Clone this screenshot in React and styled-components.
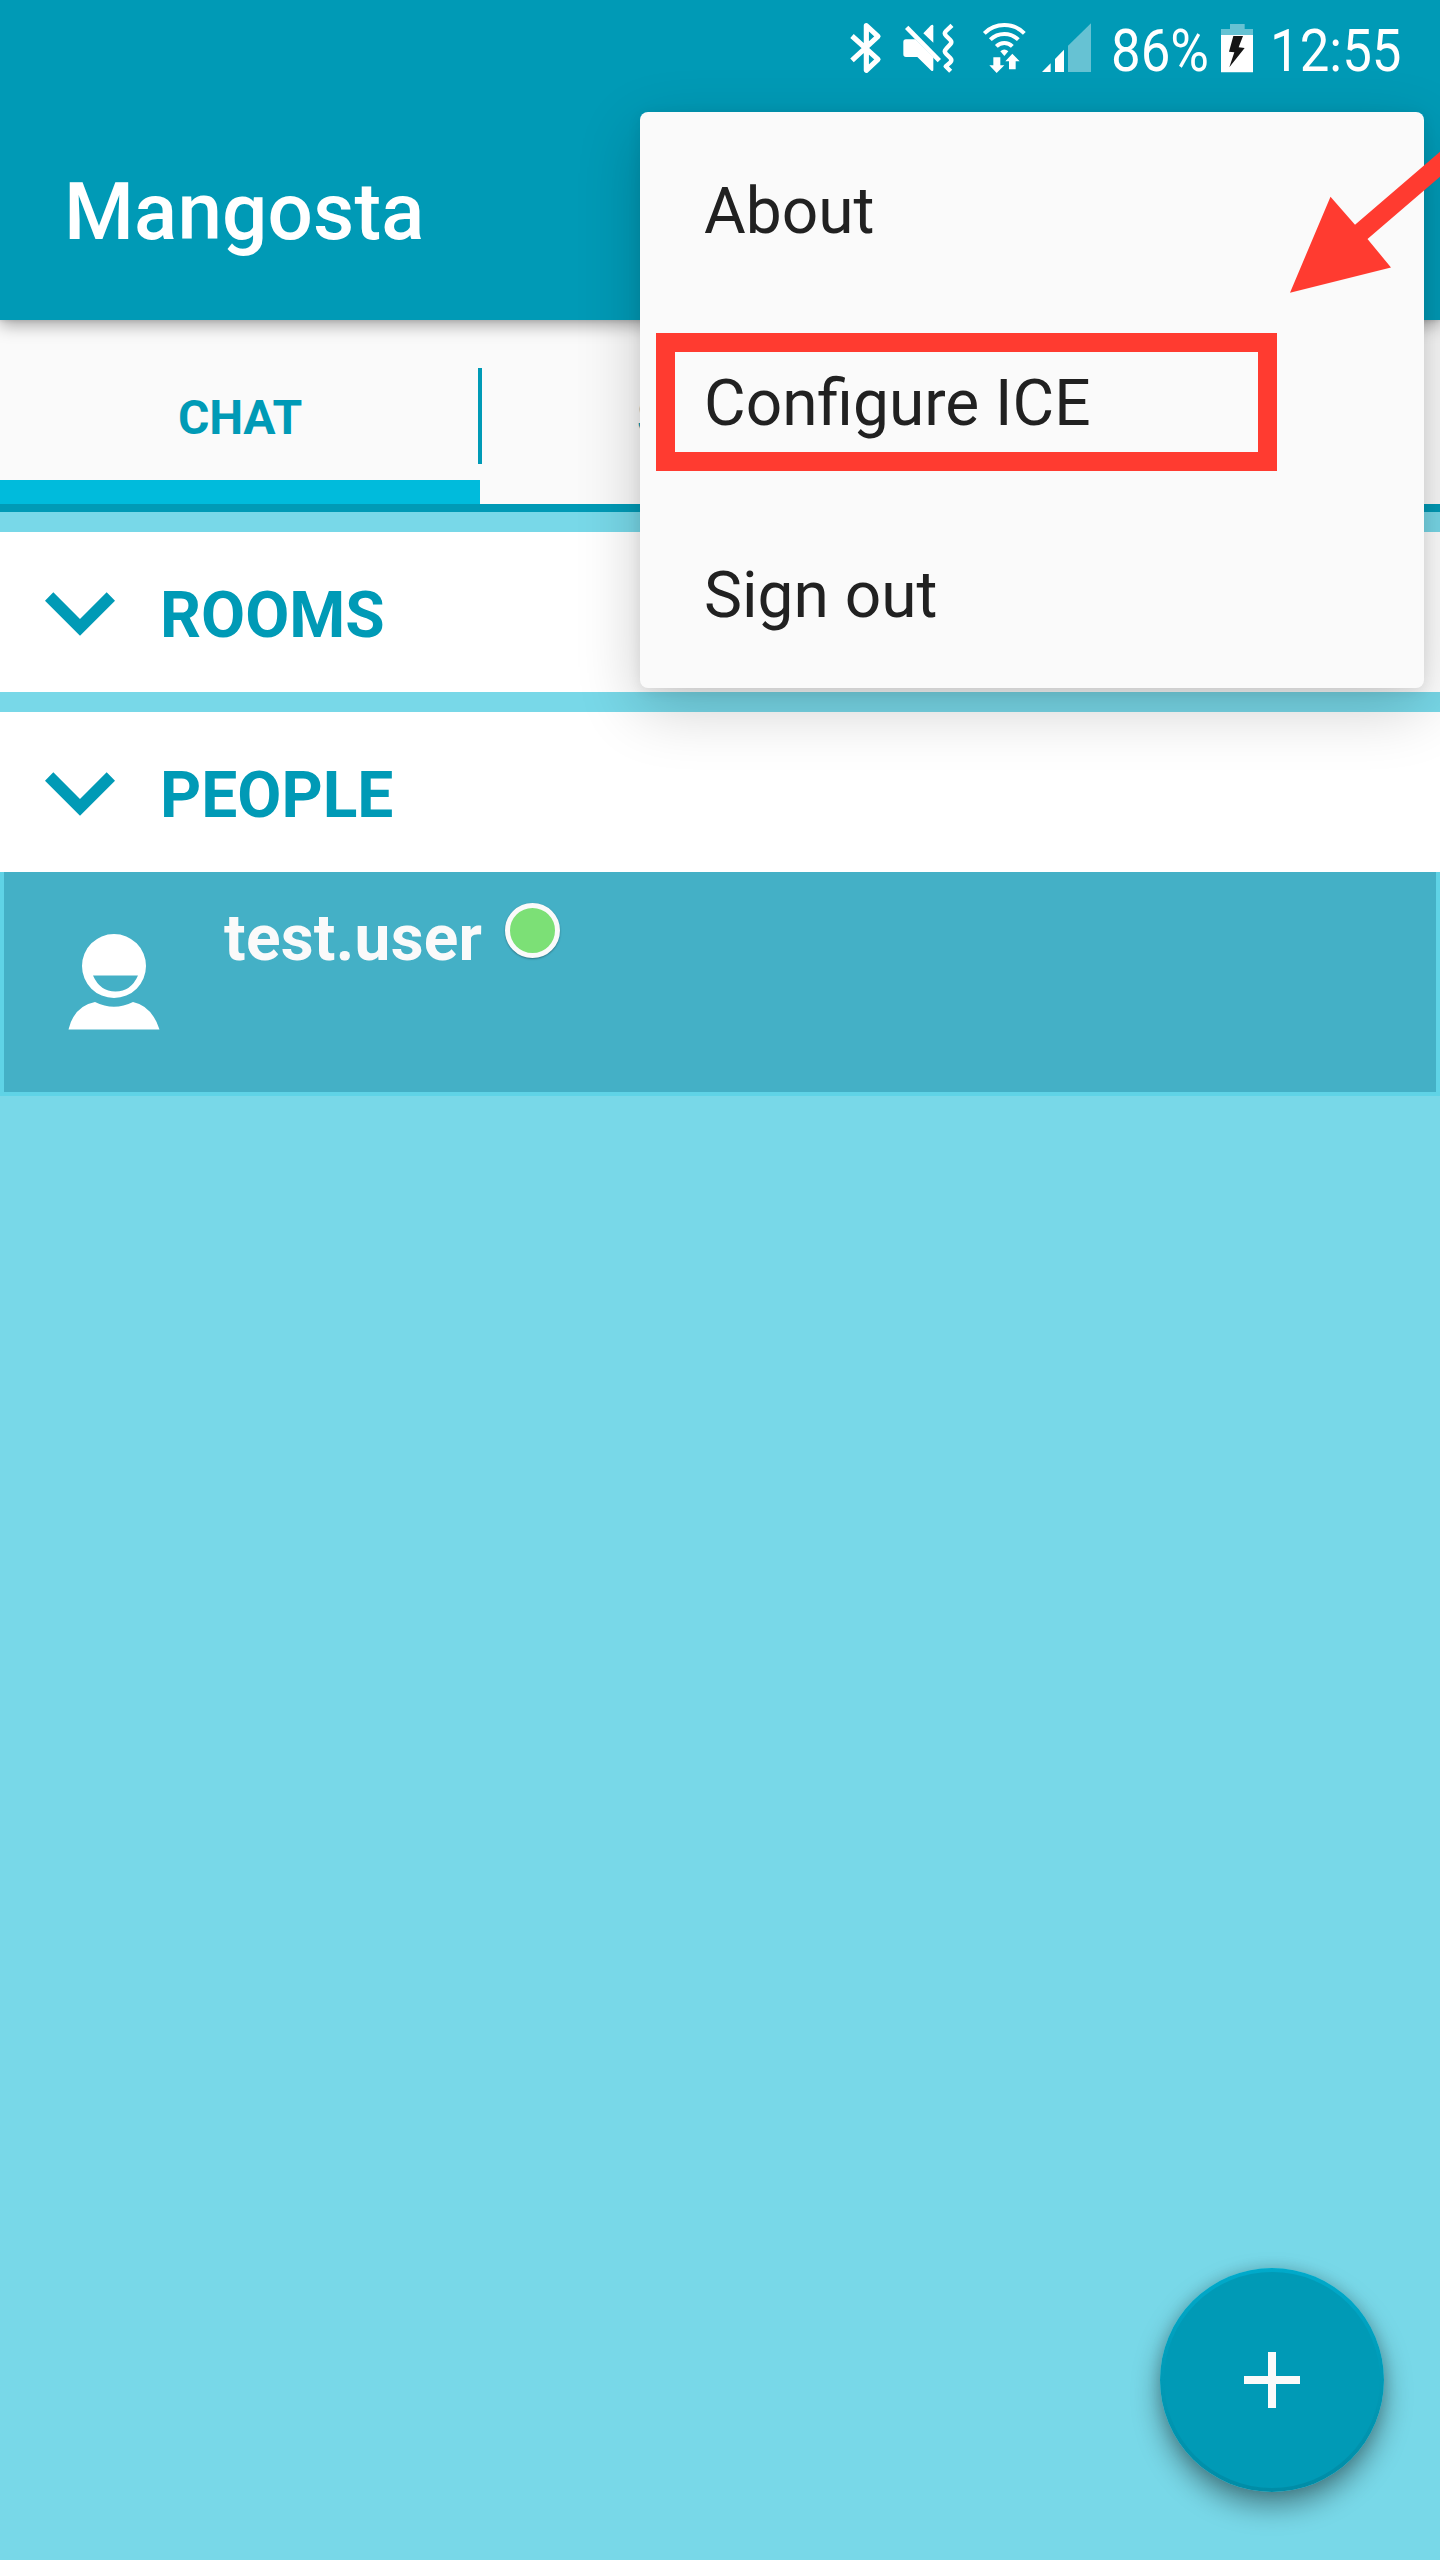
import React from "react";
import styled, { createGlobalStyle } from "styled-components";

const TEAL = "#009ab6";
const SKY = "#78d8e8";
const RED = "#ff3b30";

const GlobalStyle = createGlobalStyle`
  * { box-sizing: border-box; }
  body { margin: 0; background: ${SKY}; overflow: hidden; }
`;

const Screen = styled.div`
  position: relative;
  width: 1440px;
  height: 2560px;
  overflow: hidden;
  display: flex;
  flex-direction: column;
  background: ${SKY};
  font-family: Roboto, "Liberation Sans", sans-serif;
`;

const Header = styled.header`
  flex: none;
  position: relative;
  height: 320px;
  background: ${TEAL};
  box-shadow: 0 5px 16px rgba(0, 0, 0, 0.34), 0 0 5px rgba(0, 0, 0, 0.14);
`;

const StatusBar = styled.div`
  height: 96px;
  padding-left: 848px;
  display: flex;
  align-items: center;
`;

const StatusIcon = styled.svg`
  flex: none;
  height: 52px;
  width: ${(p) => p.$width}px;
  margin-right: ${(p) => p.$gap}px;
  fill: #fff;
`;

const StatusText = styled.span`
  flex: none;
  width: ${(p) => p.$width}px;
  padding-top: 5px;
  color: #fff;
  font-size: 60px;
  line-height: 70px;
  white-space: nowrap;
  transform: scaleX(0.88);
  transform-origin: left center;
`;

const Title = styled.h1`
  margin: 0;
  padding: 69px 0 0 64px;
  color: #fff;
  font-size: 80px;
  font-weight: 500;
  line-height: 94px;
  letter-spacing: 0.15px;
`;

const Tabs = styled.nav`
  flex: none;
  height: 192px;
  display: flex;
  background: #fafafa;
  border-bottom: 8px solid ${TEAL};
`;

const Tab = styled.div`
  width: 480px;
  padding-top: 11px;
  padding-left: ${(p) => p.$indent || 0}px;
  display: flex;
  align-items: center;
  justify-content: ${(p) => (p.$indent ? "flex-start" : "center")};
  color: ${TEAL};
  font-size: 48px;
  font-weight: 700;
  letter-spacing: -0.25px;
  box-shadow: ${(p) => (p.$active ? "inset 0 -24px #00bbdc" : "none")};
`;

const TabDivider = styled.div`
  width: 4px;
  height: 96px;
  margin: 48px -2px 0;
  background: ${TEAL};
`;

const Sections = styled.main`
  padding-top: 20px;
  display: flex;
  flex-direction: column;
  gap: 20px;
`;

const SectionHead = styled.div`
  height: 160px;
  padding-left: 45px;
  display: flex;
  align-items: center;
  gap: 45px;
  background: #fff;
`;

const SectionLabel = styled.h2`
  margin: 0;
  padding-top: 7px;
  color: ${TEAL};
  font-size: 64px;
  font-weight: 700;
  line-height: 75px;
`;

const Chevron = styled.svg`
  width: 70px;
  height: 44px;
  margin-top: 3px;
  fill: ${TEAL};
`;

const PersonRow = styled.div`
  height: 224px;
  display: flex;
  align-items: flex-start;
  padding-left: 64px;
  background: #44b0c6;
  border: solid #5fd3e6;
  border-width: 0 4px 4px;
`;

const Avatar = styled.svg`
  width: 92px;
  height: 96px;
  margin-top: 62px;
`;

const PersonName = styled.span`
  margin: 29px 0 0 64px;
  color: #fafafa;
  font-size: 64px;
  font-weight: 700;
  line-height: 75px;
  letter-spacing: 0.25px;
`;

const Presence = styled.span`
  width: 55px;
  height: 55px;
  margin: 31px 0 0 23px;
  border: 5px solid #fafafa;
  border-radius: 50%;
  background: #7ce076;
  box-shadow: 0 1px 2px rgba(0, 0, 0, 0.35);
`;

const Menu = styled.div`
  position: absolute;
  top: 112px;
  left: 640px;
  width: 784px;
  height: 576px;
  display: flex;
  flex-direction: column;
  border-radius: 8px;
  background: #fafafa;
  box-shadow: 0 20px 64px rgba(0, 0, 0, 0.2), 0 3px 14px rgba(0, 0, 0, 0.08);
`;

const MenuItem = styled.div`
  height: 192px;
  padding: 6px 0 0 64px;
  display: flex;
  align-items: center;
  color: #212121;
  font-size: 64px;
`;

const Highlight = styled.div`
  position: absolute;
  top: 333px;
  left: 656px;
  width: 621px;
  height: 138px;
  border: 19px solid ${RED};
`;

const Arrow = styled.svg`
  position: absolute;
  top: 140px;
  left: 1280px;
  width: 160px;
  height: 160px;
  fill: ${RED};
`;

const AddButton = styled.button`
  position: absolute;
  top: 2268px;
  left: 1160px;
  width: 224px;
  height: 224px;
  padding: 4px;
  border: 0;
  border-radius: 50%;
  background: linear-gradient(#00aacb, #009ab6 50%, #008ca6);
  box-shadow: 0 14px 28px rgba(0, 0, 0, 0.4), 0 0 14px rgba(0, 0, 0, 0.14);
`;

const AddFace = styled.span`
  width: 216px;
  height: 216px;
  display: flex;
  align-items: center;
  justify-content: center;
  border-radius: 50%;
  background: ${TEAL};
`;

const Section = ({ label }) => (
  <SectionHead>
    <Chevron viewBox="135 155 210 132">
      <path d="M135 181 160 156 240 236 320 156 345 181 240 286Z" />
    </Chevron>
    <SectionLabel>{label}</SectionLabel>
  </SectionHead>
);

const menuItems = ["About", "Configure ICE", "Sign out"];

export default function App() {
  return (
    <Screen>
      <GlobalStyle />
      <Header>
        <StatusBar>
          <StatusIcon $width={35} $gap={19} viewBox="24 36 105 156">
            <path
              d="M36 78 114 148 79 181V47L114 79 36 151"
              fill="none"
              stroke="#fff"
              strokeWidth="15.5"
              strokeLinejoin="round"
            />
          </StatusIcon>
          <StatusIcon $width={54} $gap={26} viewBox="186 36 162 156">
            <path d="M190 96q0-8 8-8H226L280 142V179q0 6-6 3L232 141H198q-8 0-8-8Z" />
            <path d="M250 70 273 46q7-4 7 3V98Z" />
            <path d="M200 52 298 152" fill="none" stroke="#fff" strokeWidth="14" />
            <path
              d="M336 46 318 63q-7 7 0 14L331 90q6 6 0 13L318 117q-7 7 0 14L331 144q6 6 0 13L317 169 332 184"
              fill="none"
              stroke="#fff"
              strokeWidth="13"
              strokeLinejoin="round"
            />
          </StatusIcon>
          <StatusIcon $width={45} $gap={14} viewBox="426 36 135 156">
            <g fill="none" stroke="#fff" strokeWidth="12">
              <path d="M433 70A85 85 0 0 1 553 70" />
              <path d="M451 89A60 60 0 0 1 535 89" />
              <path d="M469 109A34 34 0 0 1 517 109" />
            </g>
            <path d="M481 124Q493 113 505 124L493 138Z" />
            <path d="M460 142H481V166H493L470 189 448 166H460Z" />
            <path d="M507 178V154H496L517 131 539 154H527V178Z" />
          </StatusIcon>
          <StatusIcon $width={51} $gap={19} viewBox="603 36 153 156">
            <path d="M606 186 632 160V186ZM645 186V147L672 119V186Z" />
            <path d="M684 186V107L753 40V186Z" opacity="0.4" />
          </StatusIcon>
          <StatusText $width={109}>86%</StatusText>
          <StatusIcon $width={34} $gap={16} viewBox="360 36 102 156">
            <path d="M390 42H434V57H459V75H363V57H390Z" opacity="0.4" />
            <path d="M363 75H459V187H363Z" />
            <path
              d="M400 78H429L416 112 434 114 388 172 403 127 387 125Z"
              fill="#151515"
            />
          </StatusIcon>
          <StatusText $width={150}>12:55</StatusText>
        </StatusBar>
        <Title>Mangosta</Title>
      </Header>
      <Tabs>
        <Tab $active>CHAT</Tab>
        <TabDivider />
        <Tab $indent={157}>S</Tab>
      </Tabs>
      <Sections>
        <Section label="ROOMS" />
        <div>
          <Section label="PEOPLE" />
          <PersonRow>
            <Avatar viewBox="68 934 92 96">
              <path
                fill="#fff"
                fillRule="evenodd"
                d="M114 934a32 32 0 1 1 0 64a32 32 0 1 1 0-64ZM93 975.5Q100 991.5 115.500 991.5T138 975.5Z"
              />
              <path
                fill="#fff"
                d="M68.500 1029.500Q74 1006 95 1002Q114 1011.500 133 1002Q152 1006 159.500 1029.500Z"
              />
            </Avatar>
            <PersonName>test.user</PersonName>
            <Presence />
          </PersonRow>
        </div>
      </Sections>
      <Menu>
        {menuItems.map((item) => (
          <MenuItem key={item}>{item}</MenuItem>
        ))}
      </Menu>
      <Highlight />
      <Arrow viewBox="1280 140 160 160">
        <path d="M1290 292.700 1330.500 196.700 1355 224.700 1441 151V176L1367.500 239 1391 267.500Z" />
      </Arrow>
      <AddButton aria-label="Add">
        <AddFace>
          <svg width="56" height="56" fill="#fafafa">
            <path d="M24 0h8v24h24v8H32v24h-8V32H0v-8h24Z" />
          </svg>
        </AddFace>
      </AddButton>
    </Screen>
  );
}
